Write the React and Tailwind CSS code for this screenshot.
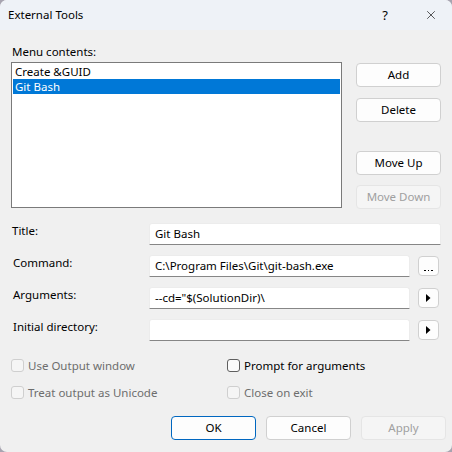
import { X } from 'lucide-react'

const font = { fontFamily: '"Segoe UI", "Noto Sans", sans-serif' }

function Btn({ children, disabled, primary, className = '' }) {
  return (
    <div
      className={`flex items-center justify-center h-[24px] w-[85px] rounded-[4px] border text-[11.5px] ${
        disabled
          ? 'bg-[#f5f5f5] border-[#e5e5e5] text-[#a0a0a0]'
          : primary
          ? 'bg-[#fdfdfd] border-[#0067c0] text-black'
          : 'bg-[#fdfdfd] border-[#d0d0d0] text-black'
      } ${className}`}
    >
      {children}
    </div>
  )
}

function Field({ value }) {
  return (
    <div className="h-[22px] flex-1 bg-white border border-[#ececec] border-b-[#868686] rounded-t-[3px] flex items-center pl-[5px] text-[11.5px] text-black">
      {value}
    </div>
  )
}

function SmallBtn({ children }) {
  return (
    <div className="ml-[8px] w-[21px] h-[20px] mt-[1px] rounded-[4px] bg-[#fdfdfd] border border-[#d0d0d0] flex items-center justify-center">
      {children}
    </div>
  )
}

function Arrow() {
  return (
    <svg width="5" height="8" viewBox="0 0 5 8">
      <path d="M0 0 L4.5 4 L0 8 Z" fill="#000" />
    </svg>
  )
}

function Check({ label, enabled }) {
  return (
    <div className="flex items-center h-[13px]">
      <div
        className={`w-[13px] h-[13px] rounded-[3px] border ${
          enabled ? 'border-[#5f5f5f] bg-[#fbfbfb]' : 'border-[#cfcfcf] bg-[#f5f5f5]'
        }`}
      />
      <span className={`ml-[4px] text-[11.5px] leading-[16px] ${enabled ? 'text-black' : 'text-[#6d6d6d]'}`}>
        {label}
      </span>
    </div>
  )
}

export default function App() {
  return (
    <div className="w-[452px] h-[452px] bg-[#a7a4b0]" style={font}>
      <div className="w-full h-full rounded-[7px] overflow-hidden bg-[#f0f0f0] flex flex-col">
        {/* Title bar */}
        <div className="h-[30px] bg-[#eef2f7] flex items-center pl-[8px] text-[11.5px] text-black">
          <span className="leading-[16px]">External Tools</span>
          <span className="ml-auto text-[13px] leading-[16px] mr-[36px]">?</span>
          <X className="mr-[14px]" size={14} strokeWidth={1.1} color="#000" />
        </div>

        <div className="px-[11px]">
          <div className="mt-[14px] text-[11.5px] leading-[16px] pl-[1px] text-black">Menu contents:</div>

          <div className="mt-[2px] flex">
            <div className="w-[331px] h-[146px] bg-white border border-[#7a7a7a] p-[1px] text-[11.5px] text-black">
              <div className="h-[15px] leading-[15px] pl-[2px]">Create &amp;GUID</div>
              <div className="h-[15px] leading-[15px] pl-[2px] bg-[#0078d7] text-white">Git Bash</div>
            </div>
            <div className="ml-[14px] flex flex-col">
              <Btn className="mt-[1px]">Add</Btn>
              <Btn className="mt-[11px]">Delete</Btn>
              <Btn className="mt-[29px]">Move Up</Btn>
              <Btn disabled className="mt-[10px]">Move Down</Btn>
            </div>
          </div>

          {/* Form */}
          <div className="mt-[14px] flex flex-col gap-[10px] text-[11.5px] text-black">
            <div className="flex">
              <div className="w-[138px] leading-[16px] pl-[1px]">Title:</div>
              <Field value="Git Bash" />
            </div>
            <div className="flex pr-[2px]">
              <div className="w-[138px] leading-[16px] pl-[2px]">Command:</div>
              <Field value="C:\Program Files\Git\git-bash.exe" />
              <SmallBtn>
                <div className="flex gap-[2px] mt-[9px]">
                  <div className="w-[1.5px] h-[1.5px] bg-black" />
                  <div className="w-[1.5px] h-[1.5px] bg-black" />
                  <div className="w-[1.5px] h-[1.5px] bg-black" />
                </div>
              </SmallBtn>
            </div>
            <div className="flex pr-[2px]">
              <div className="w-[138px] leading-[16px] pl-[2px]">Arguments:</div>
              <Field value={'--cd="$(SolutionDir)\\'} />
              <SmallBtn>
                <Arrow />
              </SmallBtn>
            </div>
            <div className="flex pr-[2px]">
              <div className="w-[138px] leading-[16px] pl-[2px]">Initial directory:</div>
              <Field value="" />
              <SmallBtn>
                <Arrow />
              </SmallBtn>
            </div>
          </div>

          {/* Checkboxes */}
          <div className="mt-[18px] grid grid-cols-[216px_1fr] gap-y-[14px]">
            <Check label="Use Output window" />
            <Check label="Prompt for arguments" enabled />
            <Check label="Treat output as Unicode" />
            <Check label="Close on exit" />
          </div>
        </div>

        {/* Bottom buttons */}
        <div className="mt-[17px] flex justify-end gap-[10px] pr-[6px]">
          <Btn primary>OK</Btn>
          <Btn>Cancel</Btn>
          <Btn disabled>Apply</Btn>
        </div>
      </div>
    </div>
  )
}
